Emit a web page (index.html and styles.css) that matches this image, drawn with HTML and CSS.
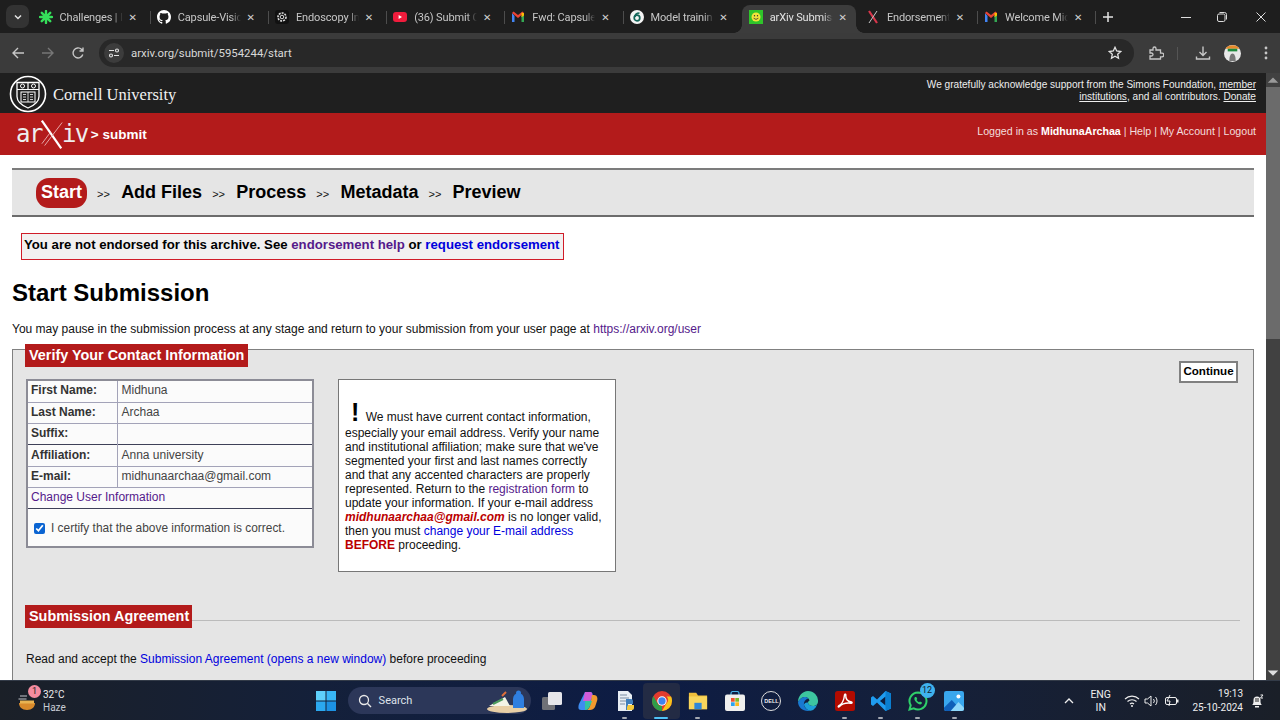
FILE: index.html
```html
<!DOCTYPE html>
<html lang="en">
<head>
<meta charset="utf-8">
<title>arXiv Submission</title>
<link rel="stylesheet" href="styles.css">
</head>
<body>
<div class="screen">
  <header class="tabstrip">
    <button class="tab-menu"><svg width="10" height="10" viewBox="0 0 10 10"><path d="M2 3.500 5 6.500 8 3.500" fill="none" stroke="#e3e3e3" stroke-width="1.500"/></svg></button>
    <div class="tab"><svg class="fav" viewBox="0 0 14 14"><g stroke="#35e05a" stroke-width="2.400" stroke-linecap="round"><path d="M7 1v12M1 7h12M2.800 2.800l8.400 8.400M11.200 2.800l-8.400 8.400"/></g></svg><span class="tab-title">Challenges | I</span><span class="tab-x">✕</span></div>
    <div class="tab"><svg class="fav" viewBox="0 0 16 16"><path fill="#fff" d="M8 0C3.580 0 0 3.580 0 8c0 3.540 2.290 6.530 5.470 7.590.4.070.55-.17.55-.38 0-.19-.01-.82-.01-1.490-2.010.37-2.530-.49-2.690-.94-.09-.23-.48-.94-.82-1.130-.28-.15-.68-.52-.01-.53.63-.01 1.080.58 1.230.82.72 1.210 1.870.87 2.330.66.07-.52.28-.87.51-1.070-1.780-.2-3.640-.89-3.640-3.950 0-.87.31-1.590.82-2.150-.08-.2-.36-1.020.08-2.120 0 0 .67-.21 2.200.82.64-.18 1.320-.27 2-.27s1.360.09 2 .27c1.530-1.040 2.200-.82 2.200-.82.44 1.100.16 1.920.08 2.120.51.56.82 1.270.82 2.150 0 3.070-1.870 3.750-3.650 3.950.29.25.54.73.54 1.480 0 1.070-.01 1.930-.01 2.200 0 .21.15.46.55.38A8.010 8.010 0 0 0 16 8c0-4.420-3.580-8-8-8z"/></svg><span class="tab-title">Capsule-Visic</span><span class="tab-x">✕</span></div>
    <div class="tab"><svg class="fav" viewBox="0 0 14 14"><rect width="14" height="14" rx="3" fill="#111"/><circle cx="7" cy="7" r="4" fill="none" stroke="#ddd" stroke-width="1.600" stroke-dasharray="2 1"/><circle cx="7" cy="7" r="1.800" fill="none" stroke="#ddd"/></svg><span class="tab-title">Endoscopy In</span><span class="tab-x">✕</span></div>
    <div class="tab"><svg class="fav" viewBox="0 0 14 14"><rect y="2" width="14" height="10" rx="3" fill="#f01c3c"/><path d="M5.600 5v4l3.400-2z" fill="#fff"/></svg><span class="tab-title">(36) Submit C</span><span class="tab-x">✕</span></div>
    <div class="tab"><svg class="fav" viewBox="0 0 14 14"><path d="M1 3v9h2.500V6z" fill="#4285f4"/><path d="M13 3v9h-2.500V6z" fill="#34a853"/><path d="M1 3 7 8 13 3 11.500 1.600 7 5 2.500 1.600z" fill="#ea4335"/><path d="M13 3v2.500l-2.500 1.800V2.800z" fill="#fbbc04"/></svg><span class="tab-title">Fwd: Capsule</span><span class="tab-x">✕</span></div>
    <div class="tab tab-nosep"><svg class="fav" viewBox="0 0 14 14"><circle cx="7" cy="7" r="7" fill="#f4f4f4"/><circle cx="7" cy="8" r="2.800" fill="none" stroke="#14665a" stroke-width="1.700"/><path d="M5 7C5 4.500 7 3 9.500 3" fill="none" stroke="#14665a" stroke-width="1.700"/></svg><span class="tab-title">Model trainin</span><span class="tab-x">✕</span></div>
    <div class="tab tab-active"><svg class="fav" viewBox="0 0 14 14"><rect width="14" height="14" fill="#2fc42a"/><circle cx="7" cy="7" r="4.500" fill="#f2e43a"/><circle cx="5.500" cy="5.800" r=".7" fill="#333"/><circle cx="8.500" cy="5.800" r=".7" fill="#333"/><path d="M4.600 8.200Q7 10.600 9.400 8.200" fill="none" stroke="#333" stroke-width=".8"/></svg><span class="tab-title">arXiv Submiss</span><span class="tab-x">✕</span></div>
    <div class="tab"><svg class="fav" viewBox="0 0 14 14"><path d="M3 1l8 12" stroke="#d8354a" stroke-width="2.200"/><path d="M11 1 3 13" stroke="#c9c9c9" stroke-width="1"/></svg><span class="tab-title">Endorsement</span><span class="tab-x">✕</span></div>
    <div class="tab"><svg class="fav" viewBox="0 0 14 14"><path d="M1 3v9h2.500V6z" fill="#4285f4"/><path d="M13 3v9h-2.500V6z" fill="#34a853"/><path d="M1 3 7 8 13 3 11.500 1.600 7 5 2.500 1.600z" fill="#ea4335"/><path d="M13 3v2.500l-2.500 1.800V2.800z" fill="#fbbc04"/></svg><span class="tab-title">Welcome Mic</span><span class="tab-x">✕</span></div>
    <svg class="new-tab" width="12" height="12" viewBox="0 0 12 12"><path d="M6 1v10M1 6h10" stroke="#e3e3e3" stroke-width="1.500"/></svg>
    <div class="win-controls">
      <svg class="win-btn win-min" viewBox="0 0 12 12"><path d="M1 6.500h10" stroke="#ddd"/></svg>
      <svg class="win-btn win-max" viewBox="0 0 12 12"><rect x="1.500" y="3" width="7.500" height="7.500" rx="1.500" fill="none" stroke="#ddd"/><path d="M3.500 1.500h5a2 2 0 0 1 2 2v5" fill="none" stroke="#ddd"/></svg>
      <svg class="win-btn win-close" viewBox="0 0 12 12"><path d="M1.500 1.500l9 9M10.500 1.500l-9 9" stroke="#ddd"/></svg>
    </div>
  </header>

  <div class="toolbar">
    <svg class="nav-icon" viewBox="0 0 14 14"><path d="M13 7H2M7 2 2 7l5 5" fill="none" stroke="#c7c7c7" stroke-width="1.400"/></svg>
    <svg class="nav-icon" viewBox="0 0 14 14"><path d="M1 7h11M7 2l5 5-5 5" fill="none" stroke="#777" stroke-width="1.400"/></svg>
    <svg class="nav-icon" viewBox="0 0 14 14"><path d="M11.800 8.500A5 5 0 1 1 10.500 3.300L12 5M12 1.500V5H8.500" fill="none" stroke="#c7c7c7" stroke-width="1.400"/></svg>
    <div class="omnibox">
      <span class="site-info"><svg width="12" height="12" viewBox="0 0 12 12"><path d="M1 3.500h5M6 8.500h5" stroke="#e3e3e3" stroke-width="1.200"/><circle cx="9" cy="3.500" r="1.500" fill="none" stroke="#e3e3e3" stroke-width="1.100"/><circle cx="3" cy="8.500" r="1.500" fill="none" stroke="#e3e3e3" stroke-width="1.100"/></svg></span>
      <span class="url">arxiv.org/submit/5954244/start</span>
      <svg class="star" width="14" height="14" viewBox="0 0 14 14"><path d="M7 1.300l1.700 3.700 4 .5-3 2.700.8 4L7 10.200l-3.500 2 .8-4-3-2.700 4-.5z" fill="none" stroke="#e3e3e3" stroke-width="1.300"/></svg>
    </div>
    <div class="toolbar-actions">
      <svg class="tool ext" viewBox="0 0 16 16"><path d="M2 5h3V3.500a1.500 1.500 0 0 1 3 0V5h4.500v3.200H14a1.800 1.800 0 0 1 0 3.600h-1.500V14H2v-3h1.500a1.500 1.500 0 0 0 0-3H2z" fill="none" stroke="#c7c7c7" stroke-width="1.300"/></svg>
      <span class="tool-sep"></span>
      <svg class="tool dl" viewBox="0 0 16 16"><path d="M8 1.500v8.500M4.500 7 8 10.500 11.500 7M1.500 11.500v2.500h13v-2.500" fill="none" stroke="#c7c7c7" stroke-width="1.400"/></svg>
      <svg class="avatar" viewBox="0 0 16 16"><circle cx="8" cy="8" r="8" fill="#e8e8e8"/><path d="M1.500 3.500a8 8 0 0 1 13 0z" fill="#e88a2a"/><rect x="3.500" y="3.500" width="9" height="2.500" fill="#1e8a3c"/><path d="M5 15c0-4 1-7 3-7s3 3 3 7" fill="#777"/></svg>
      <svg class="menu-dots" viewBox="0 0 4 14"><circle cx="2" cy="2" r="1.400" fill="#c7c7c7"/><circle cx="2" cy="7" r="1.400" fill="#c7c7c7"/><circle cx="2" cy="12" r="1.400" fill="#c7c7c7"/></svg>
    </div>
  </div>

  <div class="viewport">
    <main class="page">
      <div class="cornell-bar">
        <div class="cornell">
          <svg class="seal" viewBox="0 0 38 38"><circle cx="19" cy="19" r="17.500" fill="#1f1f1f" stroke="#fff" stroke-width="1.600"/><path d="M8 7.500h22v14c0 6-5 9-11 11.500-6-2.500-11-5.500-11-11.500z" fill="none" stroke="#fff" stroke-width="1.300"/><path d="M8 14.500h22M19 7.500v7" stroke="#fff" stroke-width="1.200"/><rect x="12" y="17" width="14" height="10" fill="none" stroke="#fff"/><path d="M19 17v10M14 19.500h3M14 22h3M14 24.500h3M21 19.500h3M21 22h3M21 24.500h3" stroke="#fff" stroke-width=".8"/><circle cx="13.500" cy="11" r="2" fill="none" stroke="#fff"/><circle cx="24.500" cy="11" r="2" fill="none" stroke="#fff"/></svg>
          <span class="cornell-name">Cornell University</span>
        </div>
        <p class="support">We gratefully acknowledge support from the Simons Foundation, <u>member institutions</u>, and all contributors. <u>Donate</u></p>
      </div>

      <div class="red-bar">
        <div class="brand">
          <span class="logo-text">ar</span>
          <svg class="logo-x" viewBox="0 0 26 32"><path d="M2 1 23 31" stroke="#fff" stroke-width="2.400"/><path d="M24 3 5 28" stroke="#e8b0b0" stroke-width="1"/><path d="M2 26 11 14" stroke="#e8b0b0" stroke-width="1"/></svg>
          <span class="logo-text">iv</span>
          <span class="brand-sub">&gt; submit</span>
        </div>
        <div class="userlinks">Logged in as <b>MidhunaArchaa</b> | Help | My Account | Logout</div>
      </div>

      <div class="content">
        <nav class="steps">
          <span class="step step-on">Start</span><span class="sep">&gt;&gt;</span>
          <span class="step">Add Files</span><span class="sep">&gt;&gt;</span>
          <span class="step">Process</span><span class="sep">&gt;&gt;</span>
          <span class="step">Metadata</span><span class="sep">&gt;&gt;</span>
          <span class="step">Preview</span>
        </nav>

        <div class="alert">You are not endorsed for this archive. See <a class="visited" href="#">endorsement help</a> or <a class="link" href="#">request endorsement</a></div>

        <h1 class="title">Start Submission</h1>
        <p class="intro">You may pause in the submission process at any stage and return to your submission from your user page at <a class="visited" href="#">https://arxiv.org/user</a></p>

        <section class="panel">
          <div class="panel-head">
            <h2 class="legend legend-1">Verify Your Contact Information</h2>
            <button class="continue">Continue</button>
          </div>
          <div class="contact-row">
            <div class="contact-card">
              <table class="contact">
                <tr><th>First Name:</th><td>Midhuna</td></tr>
                <tr><th>Last Name:</th><td>Archaa</td></tr>
                <tr class="dark"><th>Suffix:</th><td></td></tr>
                <tr><th>Affiliation:</th><td>Anna university</td></tr>
                <tr><th>E-mail:</th><td>midhunaarchaa@gmail.com</td></tr>
                <tr class="dark"><td colspan="2"><a class="visited" href="#">Change User Information</a></td></tr>
              </table>
              <label class="certify"><input type="checkbox" checked> I certify that the above information is correct.</label>
            </div>
            <div class="notice">
              <p><span class="bang">!</span> We must have current contact information, especially your email address. Verify your name and institutional affiliation; make sure that we've segmented your first and last names correctly and that any accented characters are properly represented. Return to the <a class="visited" href="#">registration form</a> to update your information. If your e-mail address <b class="mail">midhunaarchaa@gmail.com</b> is no longer valid, then you must <a class="link" href="#">change your E-mail address</a> <b class="before">BEFORE</b> proceeding.</p>
            </div>
          </div>
          <div class="agreement-head"><h2 class="legend legend-2">Submission Agreement</h2></div>
          <p class="agreement">Read and accept the <a class="link" href="#">Submission Agreement (opens a new window)</a> before proceeding</p>
        </section>
      </div>
    </main>
    <div class="scrollbar">
      <svg class="arrow" viewBox="0 0 8 8"><path d="M1 5.500 4 2.500 7 5.500z" fill="#9a9a9a"/></svg>
      <div class="thumb"></div>
      <svg class="arrow arrow-down" viewBox="0 0 8 8"><path d="M1 2.500 4 5.500 7 2.500z" fill="#ddd"/></svg>
    </div>
  </div>

  <footer class="taskbar">
    <div class="weather">
      <span class="weather-icon">
        <svg width="20" height="20" viewBox="0 0 20 20"><path d="M2 12h16c0 4-3 7-8 7s-8-3-8-7z" fill="#d98a2b"/><rect x="3" y="9.500" width="14" height="3" fill="#e9b352"/><path d="M3 5h7M1.500 8h8" stroke="#8c8f96" stroke-width="1.500"/></svg>
        <span class="weather-badge">1</span>
      </span>
      <span class="weather-text"><span>32°C</span><span class="muted">Haze</span></span>
    </div>
    <div class="task-icons">
      <span class="task"><svg viewBox="0 0 20 20"><rect x="0" y="0" width="9.500" height="9.500" fill="#5fd0fb"/><rect x="10.500" y="0" width="9.500" height="9.500" fill="#38b6f5"/><rect x="0" y="10.500" width="9.500" height="9.500" fill="#2ba8ef"/><rect x="10.500" y="10.500" width="9.500" height="9.500" fill="#1c92e3"/></svg></span>
      <div class="search">
        <svg width="14" height="14" viewBox="0 0 14 14"><circle cx="6" cy="6" r="4.500" fill="none" stroke="#e8e8e8" stroke-width="1.300"/><path d="M9.300 9.300 13 13" stroke="#e8e8e8" stroke-width="1.400"/></svg>
        <span class="search-label">Search</span>
        <svg class="search-art" width="42" height="26" viewBox="0 0 42 26"><ellipse cx="20" cy="21" rx="20" ry="4" fill="#e8cfa6"/><path d="M2 18 18 9l5 9z" fill="#f3f3e6"/><path d="M6 16 16 11" stroke="#4c9a5c" stroke-width="2"/><path d="M15 8l4-4" stroke="#e0703a" stroke-width="2"/><path d="M26 20v-9a5.500 6 0 0 1 11 0v9z" fill="#2f7fe0"/><circle cx="31.500" cy="5" r="2.500" fill="#2f7fe0"/></svg>
      </div>
      <span class="task task-first"><svg viewBox="0 0 20 20"><rect x="0" y="6" width="13" height="13" rx="1.500" fill="#6f7177"/><rect x="6" y="1" width="14" height="13" rx="1.500" fill="#e6e6ea"/></svg></span>
      <span class="task"><svg viewBox="0 0 20 20"><path d="M7 1h5c3 0 3 3 2 6l-3 9c-1 3-3 3-5 3H3C0 19 0 16 1 13z" fill="#3e8cf0"/><path d="M7 1h5c2 0 3 2 2 5L12 10H5z" fill="#d25bd8"/><path d="M14 4h2c3 0 4 3 3 6l-2 6c-1 2-3 3-5 3H8c2 0 3-2 4-4z" fill="#f29a2e"/><path d="M7 10h7l-2 5c-1 2-2 4-5 4z" fill="#35c4a0"/></svg></span>
      <span class="task"><svg viewBox="0 0 20 20"><path d="M3 0h10l4 4v16H3z" fill="#e8eef4"/><path d="M5 4h7M5 7h9M5 10h6M5 13h5" stroke="#7a8da3"/><path d="M11 8h5a2 2 0 0 1 2 2v3h-5v1h3v3a2 2 0 0 1-2 2h-3v-5z" fill="#3f7fbd"/><path d="M13 14h6v3a2 2 0 0 1-2 2h-5v-3z" fill="#f5c93b"/></svg><i class="pin"></i></span>
      <span class="task task-on"><svg viewBox="0 0 22 22"><circle cx="11" cy="11" r="11" fill="#e33b2e"/><path d="M11 22A11 11 0 0 1 1.500 5.500L7 15a5 5 0 0 0 4 1z" fill="#2f9e48"/><path d="M22 11a11 11 0 0 1-11 11l5-8.500A5 5 0 0 0 16 6h5a11 11 0 0 1 1 5z" fill="#f9c41a"/><circle cx="11" cy="11" r="5.200" fill="#fff"/><circle cx="11" cy="11" r="4" fill="#3f83f0"/></svg><i class="pin pin-on"></i></span>
      <span class="task"><svg viewBox="0 0 22 20"><path d="M1 1h8l2 3h10v15H1z" fill="#f0bf3c"/><path d="M1 5h20v14H1z" fill="#f9d65c"/><rect x="7" y="12" width="8" height="7" fill="#2f87d8"/></svg><i class="pin"></i></span>
      <span class="task"><svg viewBox="0 0 20 20"><path d="M6 4V2.500a2 2 0 0 1 2-2h4a2 2 0 0 1 2 2V4" fill="none" stroke="#48b6e8" stroke-width="1.200"/><rect y="3.500" width="20" height="16.500" rx="2" fill="#f0f0ee"/><rect x="6" y="7" width="3.700" height="3.700" fill="#f0502e"/><rect x="10.300" y="7" width="3.700" height="3.700" fill="#7eba2a"/><rect x="6" y="11.300" width="3.700" height="3.700" fill="#2aa3ef"/><rect x="10.300" y="11.300" width="3.700" height="3.700" fill="#fbb91c"/></svg></span>
      <span class="task"><span class="dell">DELL</span></span>
      <span class="task"><svg viewBox="0 0 20 20"><path d="M10 0a10 10 0 0 1 10 10.500c0 3-2.500 4.500-5 4.500-3 0-5-1.500-5-3.500 0-1 1-1.500 1.500-2C11 7 8.500 5.500 6 6 3 6.500 1 9 0 11 0 5 4.500 0 10 0z" fill="#3dc6a0"/><path d="M0 11c1-2 3-4.500 6-5 2-.3 3.500.5 4.500 1.500C7.500 8 5.500 11 6 14c.5 3 3 5 6 5.700-1 .2-1.500.3-2 .3C4.500 20 0 16 0 11z" fill="#1878d0"/><path d="M10 11.500c0 2 2 3.500 5 3.500 1.500 0 3-.5 4-1.500-1 3.500-4 6.500-7 6.200C9 19 7 17 6 14c0-1 1-3 4-2.500z" fill="#1d9fd8"/></svg></span>
      <span class="task"><svg viewBox="0 0 20 20"><rect width="20" height="20" rx="2.500" fill="#b30b00"/><path d="M3.500 15c3-1.500 5.500-6 6-11 .3-1.500 1.500-1 1.300 0-.4 4 2 6.500 5.700 7 1 .2.700 1.300-.5 1.200-4.500-.5-8.500 0-11.500 3.300-1 1-1.700.2-1-.5z" fill="none" stroke="#fff" stroke-width="1.400"/></svg><i class="pin"></i></span>
      <span class="task"><svg viewBox="0 0 20 20"><path d="M14.500 0 20 2.500v15L14.500 20 6 11.500 2 15 0 13.500V6.500L2 5l4 3.500z" fill="#1f9cf0"/><path d="M14.500 5.500 9 10l5.500 4.500z" fill="#0d1d3e"/><path d="M14.500 0 20 2.500v15L14.500 20z" fill="#0a7ed0"/></svg><i class="pin"></i></span>
      <span class="task"><svg viewBox="0 0 20 20"><path d="M10 1.500a8.500 8.500 0 0 0-7.300 12.800L1.500 18.500l4.300-1.100A8.500 8.500 0 1 0 10 1.500z" fill="none" stroke="#2fd06a" stroke-width="2"/><path d="M7 6c-1 1-1 3 1 5s4 3 5.500 2l.5-1.500-2-1-1 .8C10 10.800 9 9.800 8.500 9l.8-1-1-2z" fill="#2fd06a"/></svg><span class="count">12</span><i class="pin"></i></span>
      <span class="task"><svg viewBox="0 0 18 18"><rect width="18" height="18" rx="2" fill="#39a7ee"/><path d="M0 15 7 8l9 10H2a2 2 0 0 1-2-2z" fill="#0f5fb8"/><path d="M6 18 13 10l5 5v1a2 2 0 0 1-2 2z" fill="#8fd8fb"/><circle cx="13" cy="5" r="1.800" fill="#fff"/></svg><i class="pin"></i></span>
    </div>
    <div class="tray">
      <svg class="tray-chevron" width="12" height="12" viewBox="0 0 12 12"><path d="M2 8l4-4 4 4" fill="none" stroke="#eee" stroke-width="1.300"/></svg>
      <span class="lang"><span>ENG</span><span>IN</span></span>
      <span class="tray-icons">
        <svg width="16" height="14" viewBox="0 0 16 14"><path d="M1 5a10 10 0 0 1 14 0M3.500 7.500a6.500 6.500 0 0 1 9 0M6 10a3 3 0 0 1 4 0" fill="none" stroke="#eee" stroke-width="1.100"/><circle cx="8" cy="12" r="1" fill="#eee"/></svg>
        <svg width="16" height="14" viewBox="0 0 16 14"><path d="M1 5h2.500L7 2v10L3.500 9H1z" fill="none" stroke="#eee"/><path d="M9.500 5a3 3 0 0 1 0 4M11.500 3a6 6 0 0 1 0 8" fill="none" stroke="#eee"/></svg>
        <svg width="16" height="14" viewBox="0 0 16 14"><rect x="1.500" y="3.500" width="11" height="7" rx="1.500" fill="none" stroke="#eee"/><rect x="13" y="5.500" width="1.500" height="3" fill="#eee"/><path d="M6 1 3 7h3l-1 5" fill="none" stroke="#eee"/></svg>
      </span>
      <span class="clock"><span>19:13</span><span>25-10-2024</span></span>
      <svg class="bell" width="14" height="14" viewBox="0 0 14 14"><path d="M2 11c1.500-1 1.500-2.500 1.500-5a3.500 3.500 0 0 1 7 0c0 2.500 0 4 1.500 5z" fill="#eee"/><rect x="5" y="12" width="4" height="1.500" fill="#eee"/><path d="M5 5h4M5 7h4" stroke="#222"/><path d="M10.500 1H13l-2.500 3H13" fill="none" stroke="#eee"/></svg>
    </div>
  </footer>
</div>
</body>
</html>
```
FILE: styles.css
```css
* { box-sizing: border-box; }
html, body { margin: 0; height: 100%; overflow: hidden; background: #1f1f1f; }
body { font-family: "Liberation Sans", Arial, sans-serif; }
p, h1, h2 { margin: 0; }
a { text-decoration: none; }
.screen { width: 1280px; height: 720px; display: flex; flex-direction: column; overflow: hidden; }

/* tab strip */
.tabstrip { height: 33px; flex: none; display: flex; align-items: center; background: #1e1e1e; padding-left: 6px; }
.tab-menu { width: 23px; height: 23px; margin-right: 3.600px; border: 0; border-radius: 7px; background: #333; padding: 0; display: flex; align-items: center; justify-content: center; }
.tab { position: relative; width: 118.200px; height: 28px; margin-top: 5px; flex: none; display: flex; align-items: center; padding: 0 0 4px 6px; }
.tab::after { content: ""; position: absolute; right: 0; top: 6px; width: 1px; height: 13px; background: #4d4d4d; }
.tab-nosep::after { display: none; }
.fav { width: 14px; height: 14px; flex: none; }
.tab-title { width: 63px; margin-left: 7px; flex: none; overflow: hidden; white-space: nowrap; font: 11px Roboto, sans-serif; letter-spacing: -.15px; color: #c7c7c7; -webkit-mask-image: linear-gradient(90deg, #000 84%, transparent 100%); mask-image: linear-gradient(90deg, #000 84%, transparent 100%); }
.tab-x { width: 12px; margin-left: 4px; flex: none; font: 10px "DejaVu Sans", sans-serif; color: #d0d0d0; text-align: center; }
.tab-active { width: 114.200px; margin-right: 4px; padding-left: 7px; background: #3c3c3c; border-radius: 8px 8px 0 0; }
.tab-active::before, .tab-active::after { content: ""; display: block; position: absolute; top: auto; bottom: 0; width: 8px; height: 8px; }
.tab-active::before { left: -8px; background: radial-gradient(circle at 0 0, transparent 7.500px, #3c3c3c 8px); }
.tab-active::after { right: -8px; background: radial-gradient(circle at 100% 0, transparent 7.500px, #3c3c3c 8px); }
.tab-active .tab-title { color: #e3e3e3; }
.new-tab { margin-left: 6px; flex: none; }
.win-controls { margin-left: auto; display: flex; align-items: center; }
.win-btn { width: 12px; height: 12px; flex: none; }
.win-min { margin-right: 24px; }
.win-max { margin-right: 27px; }
.win-close { margin-right: 13px; }

/* toolbar */
.toolbar { height: 40px; flex: none; display: flex; align-items: center; background: #3b3b3b; padding-left: 11px; }
.nav-icon { width: 14px; height: 14px; margin-right: 16px; flex: none; }
.omnibox { width: 1035px; height: 28px; margin-left: -2px; flex: none; display: flex; align-items: center; border-radius: 14px; background: #282828; padding: 0 12px 0 5px; }
.site-info { width: 20px; height: 20px; border-radius: 50%; background: #3c3c3c; display: flex; align-items: center; justify-content: center; flex: none; }
.url { margin-left: 7px; font: 11.400px Roboto, sans-serif; color: #d8d8d8; }
.star { margin-left: auto; }
.toolbar-actions { flex: 1; display: flex; align-items: center; padding-left: 14px; }
.tool { width: 16px; height: 16px; flex: none; }
.tool-sep { width: 1px; height: 13px; background: #555; margin: 0 17px 0 13px; }
.avatar { width: 17px; height: 17px; margin-left: 13px; flex: none; }
.menu-dots { width: 4px; height: 14px; margin-left: 23px; flex: none; }

/* page */
.viewport { flex: 1; min-height: 0; display: flex; }
.page { flex: 1; min-width: 0; overflow: hidden; background: #fff; color: #111; }
.scrollbar { width: 14px; flex: none; display: flex; flex-direction: column; background: #414141; }
.arrow { width: 14px; height: 14px; flex: none; }
.thumb { height: 252px; background: #6b6b6b; }
.arrow-down { margin-top: auto; }

.cornell-bar { height: 40px; display: flex; align-items: center; justify-content: space-between; background: #1f1f1f; padding: 0 10px 0 9px; }
.cornell { display: flex; align-items: center; padding-top: 1px; }
.seal { width: 38px; height: 38px; flex: none; }
.cornell-name { margin-left: 6px; padding-top: 2px; font: 16.500px "Liberation Serif", serif; color: #f2f2f2; }
.support { width: 340px; padding-bottom: 4px; font-size: 10.100px; line-height: 12px; color: #eee; text-align: right; }

.red-bar { height: 42px; display: flex; justify-content: space-between; background: #b31b1b; padding: 0 10px 0 16px; color: #fff; }
.brand { display: flex; align-items: center; }
.logo-text { font: 24px/1 "DejaVu Sans Mono", monospace; color: #eee; letter-spacing: -1.500px; }
.logo-x { width: 24px; height: 33px; margin: 0 -2px; flex: none; }
.brand-sub { margin-left: 3px; font-size: 13.500px; font-weight: 700; }
.userlinks { font-size: 10.630px; padding-top: 12px; color: #f3dede; }
.userlinks b { color: #fff; }

.content { padding: 13px 12px 0; }
.steps { height: 49px; display: flex; align-items: center; background: #e5e5e5; border-top: 2px solid #7c7c7c; border-bottom: 2px solid #6c6c6c; padding-left: 24px; }
.step { font-size: 18px; font-weight: 700; color: #000; }
.step-on { height: 30px; line-height: 29px; padding: 0 5px; border-radius: 13px; background: #b31b1b; color: #fff; }
.sep { margin: 3px 11.250px 0 10px; font-size: 11px; font-weight: 400; color: #111; }
.alert { width: 543px; height: 27px; margin: 16px 0 0 9px; border: 1px solid #d01c28; background: #f2f0f0; padding-left: 2px; font-size: 13.200px; font-weight: 700; line-height: 22px; color: #000; white-space: nowrap; }
.visited { color: #551a8b; }
.link { color: #0000dd; }
.title { margin-top: 19px; font-size: 24px; line-height: 28px; font-weight: 700; color: #000; }
.intro { margin-top: 15px; font-size: 12px; line-height: 14px; color: #111; }

.panel { height: 420px; margin-top: 13px; border: 1px solid #808080; background: #e5e5e5; padding: 0 13px 0 13px; }
.panel-head { display: flex; justify-content: space-between; align-items: flex-start; margin-top: -6px; }
.legend { height: 23px; padding: 0 3px 0 4px; margin-left: -1px; background: #b31b1b; color: #fff; font-size: 14.400px; line-height: 23px; font-weight: 700; white-space: nowrap; }
.legend-1 { padding-right: 4px; }
.continue { width: 59px; height: 22px; margin: 17px 2px 0 0; border: 2px solid #808080; background: #fff; padding: 0 0 3px; font: 700 11.600px "Liberation Sans", Arial, sans-serif; color: #000; }
.contact-row { display: flex; align-items: flex-start; margin-top: -5px; }
.contact-card { width: 288px; height: 169px; margin-top: 1px; border: 2px solid #8c8c96; background: #fbfbfb; }
.contact { width: 100%; border-collapse: collapse; font-size: 12px; color: #444; }
.contact tr { height: 21.300px; border-bottom: 1px solid #a3a3b8; }
.contact tr.dark { border-bottom-color: #3e4058; }
.contact th { width: 89px; padding: 0 0 2px 3px; border-right: 1px solid #a3a3b8; text-align: left; color: #333; font-weight: 700; }
.contact td { padding: 0 0 2px 4px; }
.contact td[colspan] { padding-left: 3px; }
.certify { display: flex; align-items: center; margin-top: 12px; padding-left: 6px; font-size: 11.900px; color: #444; }
.certify input { width: 11px; height: 11px; margin: 0 6px 0 0; accent-color: #0a64d2; }
.notice { width: 278px; height: 193px; margin: 1px 0 0 24px; border: 1px solid #777; background: #fff; padding: 18px 6px 0 6px; font-size: 12px; line-height: 14px; color: #111; }
.bang { font-size: 25px; line-height: 28px; font-weight: 700; margin: 0 3px 0 6px; color: #000; }
.mail { color: #b00; font-style: italic; }
.before { color: #b00; }
.agreement-head { margin-top: 33px; height: 23px; background: linear-gradient(#bbb, #bbb) left 15px / 100% 1px no-repeat; }
.legend-2 { display: inline-block; }
.agreement { margin-top: 24px; font-size: 12px; line-height: 14px; color: #111; }

/* taskbar */
.taskbar { height: 40px; flex: none; display: flex; align-items: center; background: linear-gradient(90deg, #1b2028 0%, #14203a 25%, #0d1c44 50%, #15203a 72%, #1a1f28 100%); border-top: 1px solid #333b48; color: #eee; }
.weather { width: 308px; flex: none; display: flex; align-items: center; padding-left: 17px; }
.weather-icon { position: relative; width: 20px; height: 20px; flex: none; }
.weather-badge { position: absolute; right: -4px; top: -6px; width: 13px; height: 13px; border-radius: 50%; background: #f58ca0; color: #222; font: 9px/13px Roboto, sans-serif; text-align: center; }
.weather-text { margin-left: 6px; display: flex; flex-direction: column; font: 10px/13px Roboto, sans-serif; }
.muted { color: #c7ccd4; }
.task-icons { display: flex; align-items: center; }
.task { position: relative; width: 36.600px; height: 36px; flex: none; display: flex; align-items: center; justify-content: center; }
.task svg { width: 20px; height: 20px; }
.task-first { margin-left: 3px; }
.task-on { background: #232b44; border-radius: 4px; }
.pin { position: absolute; left: 15.500px; bottom: 0; width: 5px; height: 2px; border-radius: 1px; background: #a5a9b2; }
.pin-on { left: 11px; width: 14px; background: #4fc3f7; }
.dell { width: 20px; height: 20px; border: 1px solid #ddd; border-radius: 50%; font: 700 5.500px/18px "Liberation Sans", sans-serif; color: #eee; text-align: center; }
.count { position: absolute; left: 20px; top: 0; min-width: 15px; height: 15px; border-radius: 50%; background: #3fb2ee; color: #11202c; font: 9px/15px Roboto, sans-serif; text-align: center; }
.search { width: 183px; height: 27px; margin-left: 3px; flex: none; display: flex; align-items: center; border-radius: 14px; background: #2c3759; padding-left: 10px; }
.search-label { margin-left: 7px; font: 11px Roboto, sans-serif; color: #dfe3ea; }
.search-art { margin-left: auto; margin-right: 2px; }
.tray { flex: 1; display: flex; align-items: center; padding: 0 16px 0 90px; }
.tray-chevron { flex: none; }
.lang { width: 24px; margin-left: 14px; display: flex; flex-direction: column; align-items: center; font: 10.500px/13px Roboto, sans-serif; }
.tray-icons { margin-left: 11px; display: flex; gap: 4px; align-items: center; }
.clock { margin-left: auto; display: flex; flex-direction: column; align-items: flex-end; font: 10px/14px Roboto, sans-serif; white-space: nowrap; }
.bell { margin-left: 7px; flex: none; }
```
